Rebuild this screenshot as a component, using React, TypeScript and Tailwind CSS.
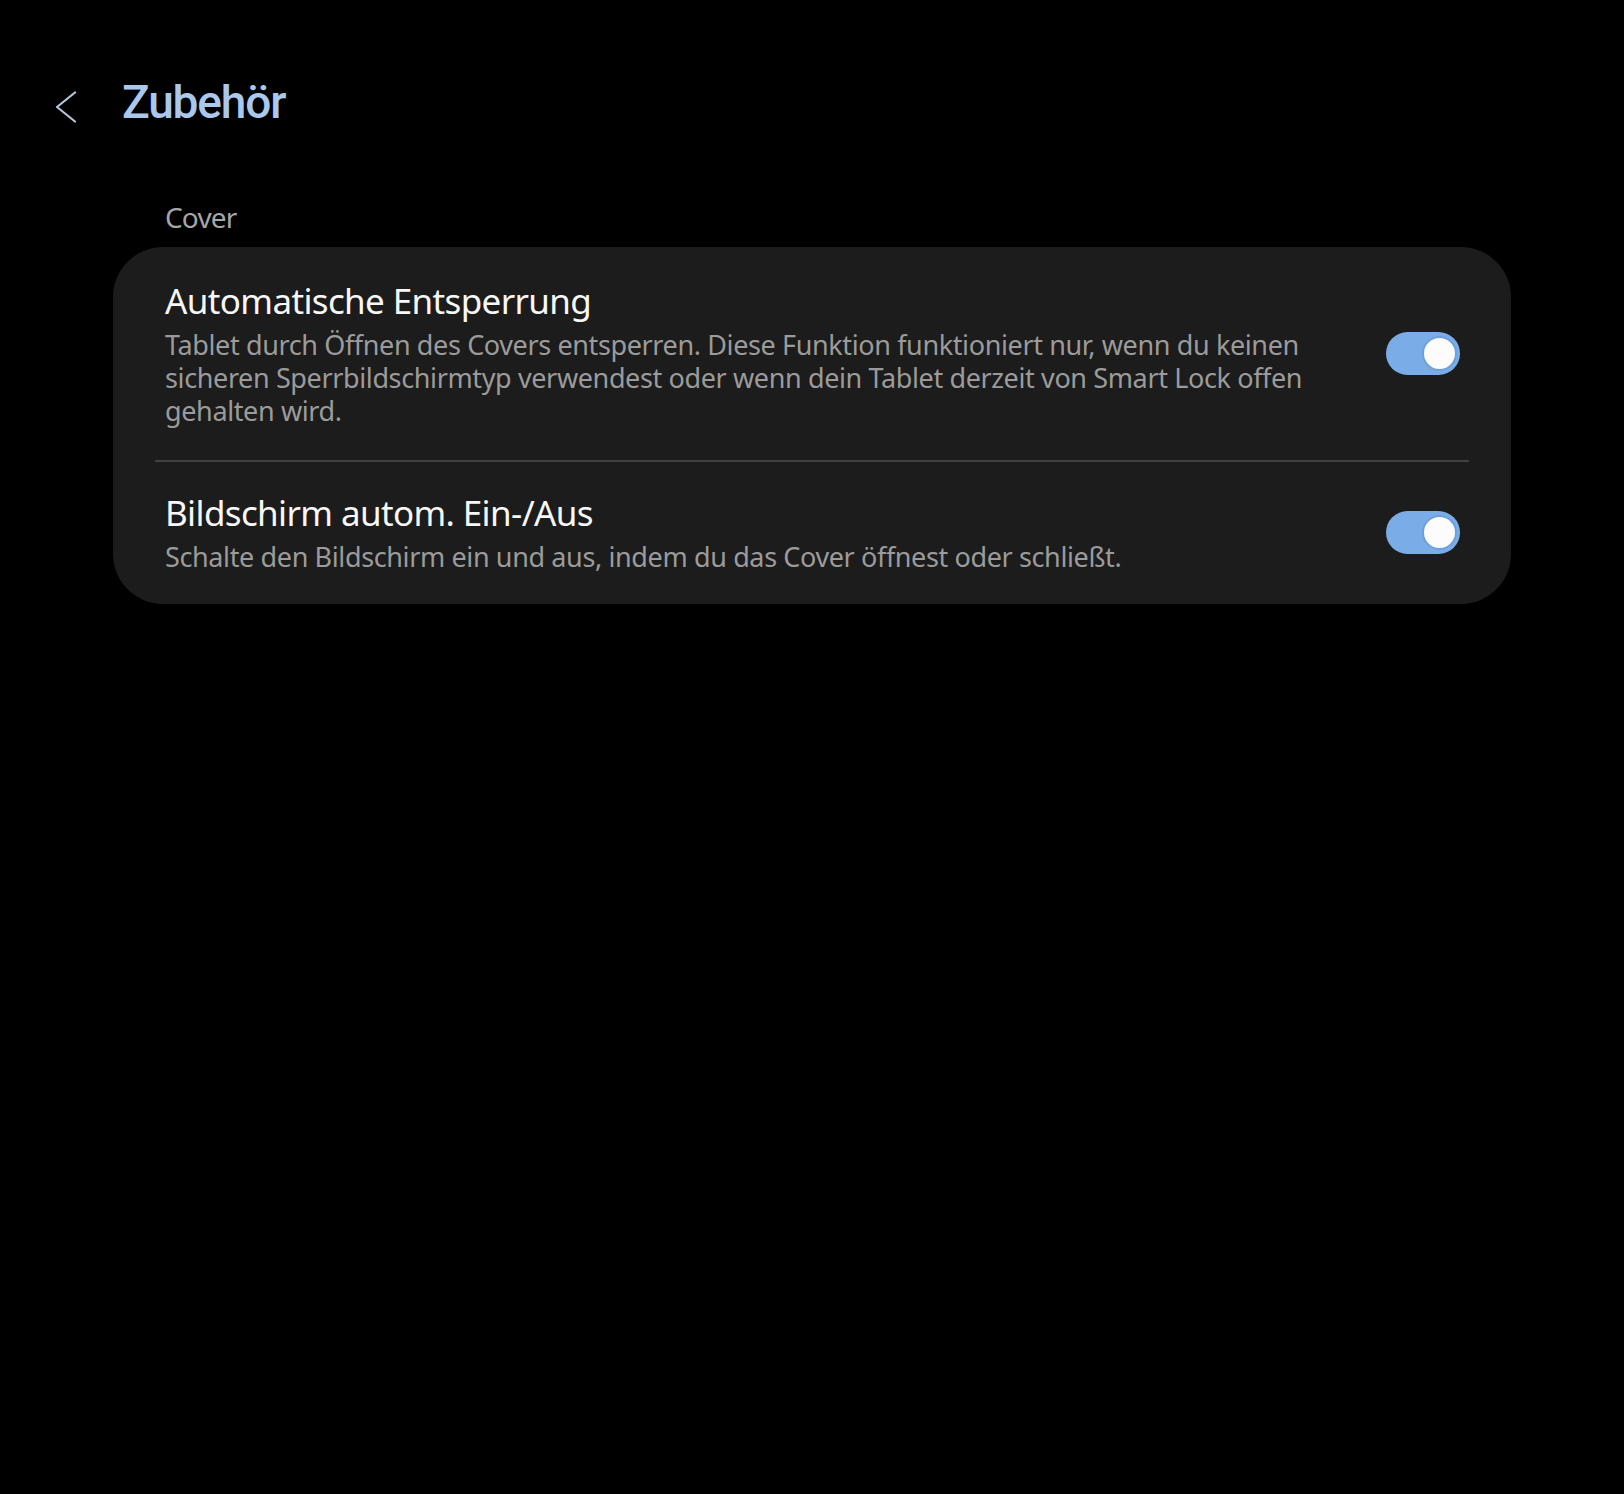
import { useState } from "react";

type SettingRowProps = {
  title: string;
  description: string;
  checked: boolean;
  onToggle: () => void;
  className?: string;
};

function Toggle({ checked, onToggle }: { checked: boolean; onToggle: () => void }) {
  return (
    <button
      type="button"
      onClick={onToggle}
      aria-pressed={checked}
      className={`flex h-[43px] w-[74px] shrink-0 items-center rounded-full px-[3px] ${
        checked ? "justify-end bg-[#7aade8]" : "justify-start bg-[#5a5a5a]"
      }`}
    >
      <span className="h-[35px] w-[35px] rounded-full border-2 border-[#6c9fdc] bg-[#fcfcfc]" />
    </button>
  );
}

function SettingRow({ title, description, checked, onToggle, className }: SettingRowProps) {
  return (
    <div className={`flex items-center justify-between pl-[52px] pr-[51px] ${className ?? ""}`}>
      <div className="w-[1160px]">
        <p className="text-[35px] leading-[42px] tracking-[-0.018em] text-[#f7f7f7]">{title}</p>
        <p className="mt-1.5 text-[27px] leading-[33px] tracking-[-0.014em] text-[#9b9b9b]">
          {description}
        </p>
      </div>
      <Toggle checked={checked} onToggle={onToggle} />
    </div>
  );
}

export default function App() {
  const [autoUnlock, setAutoUnlock] = useState(true);
  const [autoScreen, setAutoScreen] = useState(true);

  return (
    <div className="min-h-[1494px] w-full bg-black font-['Noto_Sans',sans-serif]">
      <header className="flex items-start pt-[73px]">
        <button type="button" className="ml-[54px] mt-[18px] text-[#b3c7df]" aria-label="Zurück">
          <svg width="24" height="32" viewBox="0 0 24 32" fill="none">
            <path d="M21 1.5 L3 16 L21 30.5" stroke="currentColor" strokeWidth="2.2" strokeLinecap="round" strokeLinejoin="round" />
          </svg>
        </button>
        <h1 className="ml-[44px] font-['Roboto',sans-serif] text-[46px] font-medium leading-[58px] tracking-[-0.025em] text-[#a9c8ec]">
          Zubehör
        </h1>
      </header>

      <p className="mt-[69px] pl-[165px] text-[28px] leading-[34px] tracking-[-0.03em] text-[#a6a6a6]">Cover</p>

      <section className="mx-[113px] mt-[13px] rounded-[50px] bg-[#1c1c1c]">
        <SettingRow
          className="pb-[33px] pt-[33px]"
          title="Automatische Entsperrung"
          description="Tablet durch Öffnen des Covers entsperren. Diese Funktion funktioniert nur, wenn du keinen sicheren Sperrbildschirmtyp verwendest oder wenn dein Tablet derzeit von Smart Lock offen gehalten wird."
          checked={autoUnlock}
          onToggle={() => setAutoUnlock((v) => !v)}
        />
        <div className="mx-[42px] h-[2px] bg-[#404040]" />
        <SettingRow
          className="pb-[31px] pt-[30px]"
          title="Bildschirm autom. Ein-/Aus"
          description="Schalte den Bildschirm ein und aus, indem du das Cover öffnest oder schließt."
          checked={autoScreen}
          onToggle={() => setAutoScreen((v) => !v)}
        />
      </section>
    </div>
  );
}
